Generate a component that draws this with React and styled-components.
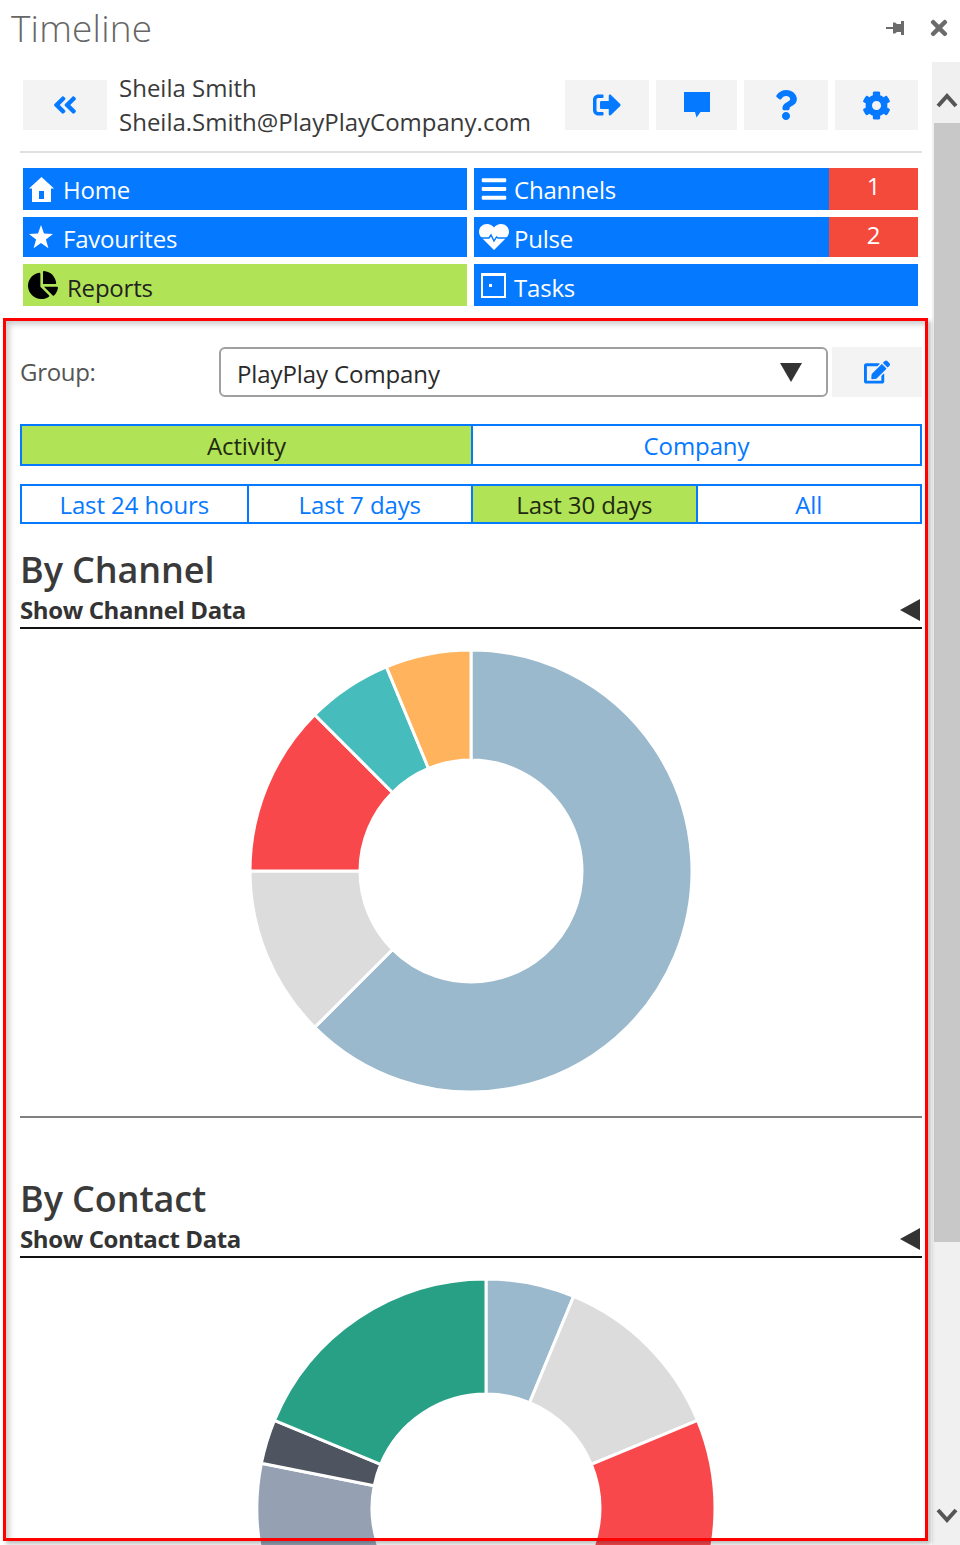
import React from "react";
import styled, { createGlobalStyle } from "styled-components";
import {
  FaAngleDoubleLeft,
  FaSignOutAlt,
  FaQuestion,
  FaCog,
  FaEdit,
  FaChartPie,
  FaBars,
  FaTimes,
} from "react-icons/fa";

const GlobalStyle = createGlobalStyle`
  html, body {
    margin: 0;
    padding: 0;
    background: #fff;
  }
  * {
    box-sizing: border-box;
  }
`;

const BLUE = "#0579ff";
const GREEN = "#b1e356";
const RED = "#f44a3c";

const Window = styled.div`
  position: relative;
  width: 960px;
  height: 1545px;
  overflow: hidden;
  background: #fff;
  font-family: "Open Sans", "Noto Sans", sans-serif;
  color: #3a3a3a;
`;

const TitleBar = styled.div`
  height: 62px;
  display: flex;
  align-items: center;
  justify-content: space-between;
  padding: 0 9px 6px 11px;
`;

const Title = styled.h1`
  margin: 0;
  font-size: 37px;
  font-weight: 300;
  line-height: 44px;
  letter-spacing: 0.2px;
  color: #666;
`;

const WindowActions = styled.div`
  display: flex;
  align-items: center;
  gap: 23px;
  color: #6b6b6b;
  font-size: 24px;
`;

const Body = styled.div`
  display: flex;
  height: 1483px;
`;

const Main = styled.main`
  flex: 1;
  min-width: 0;
`;

const Header = styled.div`
  display: flex;
  align-items: flex-start;
  padding: 18px 14px 0 23px;
  height: 89px;
`;

const IconButton = styled.button`
  width: ${(p) => p.$w || 84}px;
  height: 50px;
  margin-left: ${(p) => p.$left || 0}px;
  border: 0;
  padding: 0;
  background: #f3f3f3;
  color: ${BLUE};
  display: flex;
  align-items: center;
  justify-content: center;
  font-size: ${(p) => p.$size || 28}px;
  flex: none;
`;

const UserInfo = styled.div`
  margin: -9px 0 0 12px;
  flex: 1;
  font-size: 24px;
  line-height: 34px;
  white-space: nowrap;
`;

const HeaderActions = styled.div`
  display: flex;
  gap: 7px;
`;

const Rule = styled.hr`
  margin: ${(p) => p.$margin || "0 10px 0 20px"};
  border: 0;
  height: 2px;
  background: ${(p) => p.$color || "#e0e0e0"};
`;

const Nav = styled.nav`
  display: grid;
  grid-template-columns: 444px 444px;
  grid-template-rows: 42px 40px 42px;
  gap: 7px;
  padding: 15px 0 0 23px;
`;

const NavItem = styled.div`
  display: flex;
  align-items: center;
  background: ${(p) => (p.$active ? GREEN : BLUE)};
  color: ${(p) => (p.$active ? "#222" : "#fff")};
  font-size: 24px;
  letter-spacing: -0.2px;
  overflow: hidden;
`;

const NavIcon = styled.span`
  width: ${(p) => p.$w}px;
  margin-left: ${(p) => p.$left}px;
  display: flex;
  align-items: center;
  font-size: ${(p) => p.$size || 24}px;
  color: ${(p) => p.$color || "inherit"};
  flex: none;
`;

const NavLabel = styled.span`
  flex: 1;
  padding-top: ${(p) => p.$nudge ?? 3}px;
`;

const NavBadge = styled.span`
  align-self: stretch;
  width: 89px;
  background: ${RED};
  color: #fff;
  display: flex;
  justify-content: center;
  line-height: 36px;
`;

const Panel = styled.section`
  padding: 41px 10px 0 20px;
`;

const GroupRow = styled.div`
  display: flex;
  align-items: center;
  height: 50px;
`;

const GroupLabel = styled.label`
  width: 199px;
  font-size: 24px;
  letter-spacing: -0.3px;
  color: #555;
  margin-top: -2px;
`;

const Select = styled.div`
  width: 609px;
  height: 50px;
  border: 2px solid #a0a0a0;
  border-radius: 6px;
  display: flex;
  align-items: center;
  justify-content: space-between;
  padding: 2px 24px 0 16px;
  font-size: 24px;
  letter-spacing: -0.1px;
  color: #2a2a2a;
`;

const SelectArrow = styled.span`
  width: 0;
  height: 0;
  border-left: 11px solid transparent;
  border-right: 11px solid transparent;
  border-top: 19px solid #333;
  margin-top: -2px;
`;

const Segments = styled.div`
  display: grid;
  grid-template-columns: repeat(${(p) => p.$count}, 1fr);
  height: ${(p) => p.$h}px;
  margin-top: ${(p) => p.$top}px;
  border: 2px solid ${BLUE};
`;

const Segment = styled.div`
  display: flex;
  align-items: center;
  justify-content: center;
  font-size: 24px;
  letter-spacing: -0.1px;
  background: ${(p) => (p.$active ? GREEN : "#fff")};
  color: ${(p) => (p.$active ? "#1f2a10" : BLUE)};
  & + & {
    border-left: 2px solid ${BLUE};
  }
`;

const SectionTitle = styled.h2`
  margin: ${(p) => p.$top}px 0 0;
  font-size: 36px;
  font-weight: 600;
  line-height: 44px;
  letter-spacing: -0.1px;
  color: #3a3a3a;
`;

const ShowRow = styled.div`
  display: flex;
  align-items: center;
  justify-content: space-between;
  height: 37px;
  border-bottom: 2px solid #111;
  font-size: 24px;
  font-weight: 700;
  letter-spacing: -0.4px;
  color: #333;
`;

const Caret = styled.span`
  width: 0;
  height: 0;
  margin: 0 2px 0 0;
  border-top: 11px solid transparent;
  border-bottom: 11px solid transparent;
  border-right: 20px solid #333;
`;

const ChartWrap = styled.div`
  display: flex;
  justify-content: center;
  margin-top: 21px;
  padding-left: ${(p) => p.$shift || 0}px;
`;

const Scrollbar = styled.div`
  width: 28px;
  flex: none;
  background: #f0f0f0;
  display: flex;
  flex-direction: column;
`;

const ScrollArrow = styled.div`
  height: 61px;
  display: flex;
  align-items: center;
  justify-content: center;
  padding: ${(p) => (p.$up ? "16px 0 0 2px" : "0 0 0 2px")};
  color: #555;
`;

const ScrollThumb = styled.div`
  height: 1119px;
  margin-left: 2px;
  background: #c8c8c8;
`;

const ScrollSpacer = styled.div`
  flex: 1;
`;

const Highlight = styled.div`
  position: absolute;
  left: 3px;
  top: 318px;
  width: 925px;
  height: 1223px;
  border: 3px solid #f00;
  box-shadow: 3px 3px 4px rgba(0, 0, 0, 0.25), inset 5px 5px 6px -2px rgba(0, 0, 0, 0.22);
  pointer-events: none;
`;

const polar = (c, r, deg) => {
  const a = ((deg - 90) * Math.PI) / 180;
  return [c + r * Math.cos(a), c + r * Math.sin(a)];
};

function Donut({ size, inner, slices }) {
  const c = size / 2;
  const outer = size / 2;
  let from = 0;
  return (
    <svg width={size} height={size} viewBox={`0 0 ${size} ${size}`}>
      {slices.map((s) => {
        const to = from + s.deg;
        const [x1, y1] = polar(c, outer, from);
        const [x2, y2] = polar(c, outer, to);
        const [x3, y3] = polar(c, inner, to);
        const [x4, y4] = polar(c, inner, from);
        const large = s.deg > 180 ? 1 : 0;
        const d = `M${x1} ${y1}A${outer} ${outer} 0 ${large} 1 ${x2} ${y2}L${x3} ${y3}A${inner} ${inner} 0 ${large} 0 ${x4} ${y4}Z`;
        from = to;
        return <path key={s.color} d={d} fill={s.color} stroke="#fff" strokeWidth="3" />;
      })}
    </svg>
  );
}

const channelSlices = [
  { color: "#9ab9cc", deg: 225 },
  { color: "#dcdcdc", deg: 45 },
  { color: "#f9484b", deg: 45 },
  { color: "#47bcbc", deg: 22.5 },
  { color: "#ffb35c", deg: 22.5 },
];

const contactSlices = [
  { color: "#9ab9cc", deg: 22.5 },
  { color: "#dcdcdc", deg: 45 },
  { color: "#f9484b", deg: 45 },
  { color: "#ffb35c", deg: 90 },
  { color: "#47bcbc", deg: 45 },
  { color: "#95a1b3", deg: 33.75 },
  { color: "#4f5461", deg: 11.25 },
  { color: "#28a085", deg: 67.5 },
];

const PinIcon = () => (
  <svg width="18" height="14" viewBox="0 0 18 14" fill="currentColor">
    <path d="M0 6h7V1.500h2L11 3h4V0h3v14h-3v-3h-4l-2 1.500H7V8H0z" />
  </svg>
);

const CommentIcon = () => (
  <svg width="28" height="26" viewBox="0 0 28 26" fill="currentColor">
    <path d="M1 0h26v20H17.500L13.500 25.500 12 20H1z" />
  </svg>
);

const HomeIcon = () => (
  <svg width="25" height="25" viewBox="0 0 25 25" fill="#fff">
    <path fillRule="evenodd" d="M12.500 0 25 11.500h-3V25H3V11.500H0zM10 14v8h5v-8z" />
  </svg>
);

const StarIcon = () => (
  <svg width="24" height="24" viewBox="0 0 24 24" fill="#fff">
    <path d="M12 0l3 8.600 9 .3-7.100 5.500 2.500 8.800L12 18l-7.400 5.200 2.500-8.800L0 8.900l9-.3z" />
  </svg>
);

const PulseIcon = () => (
  <svg width="30" height="26" viewBox="0 0 30 26">
    <path
      fill="#fff"
      d="M15 26 2.500 13.500C.8 11.800 0 9.900 0 7.800 0 3.300 3.500 0 8 0c2.800 0 5.300 1.300 7 3.500C16.700 1.300 19.200 0 22 0c4.500 0 8 3.300 8 7.800 0 2.100-.8 4-2.500 5.700z"
    />
    <path fill="none" stroke={BLUE} strokeWidth="1.400" d="M1 14h9l2-3 3 6 2.500-4 1.500 1h11" />
  </svg>
);

const TaskIcon = () => (
  <svg width="25" height="25" viewBox="0 0 25 25" fill="none">
    <rect x="1" y="1" width="23" height="23" stroke="#fff" strokeWidth="2" />
    <rect x="1" y="1" width="23" height="2" fill="#fff" />
    <rect x="8" y="11" width="3" height="3" fill="#fff" />
  </svg>
);

const Chevron = ({ down }) => (
  <svg width="22" height="16" viewBox="0 0 22 16" fill="none" stroke="currentColor" strokeWidth="4">
    <path d={down ? "M2 3l9 10 9-10" : "M2 13l9-10 9 10"} />
  </svg>
);

const periods = ["Last 24 hours", "Last 7 days", "Last 30 days", "All"];

export default function App() {
  return (
    <Window>
      <GlobalStyle />
      <TitleBar>
        <Title>Timeline</Title>
        <WindowActions>
          <PinIcon />
          <FaTimes />
        </WindowActions>
      </TitleBar>
      <Body>
        <Main>
          <Header>
            <IconButton>
              <FaAngleDoubleLeft />
            </IconButton>
            <UserInfo>
              Sheila Smith
              <br />
              Sheila.Smith@PlayPlayCompany.com
            </UserInfo>
            <HeaderActions>
              <IconButton $w={84}>
                <FaSignOutAlt />
              </IconButton>
              <IconButton $w={81}>
                <CommentIcon />
              </IconButton>
              <IconButton $w={84} $size={30}>
                <FaQuestion />
              </IconButton>
              <IconButton $w={83} $size={29}>
                <FaCog />
              </IconButton>
            </HeaderActions>
          </Header>
          <Rule />
          <Nav>
            <NavItem>
              <NavIcon $left={6} $w={34}>
                <HomeIcon />
              </NavIcon>
              <NavLabel $nudge={1}>Home</NavLabel>
            </NavItem>
            <NavItem>
              <NavIcon $left={6} $w={34} $size={28}>
                <FaBars />
              </NavIcon>
              <NavLabel $nudge={1}>Channels</NavLabel>
              <NavBadge>1</NavBadge>
            </NavItem>
            <NavItem>
              <NavIcon $left={6} $w={34}>
                <StarIcon />
              </NavIcon>
              <NavLabel>Favourites</NavLabel>
            </NavItem>
            <NavItem>
              <NavIcon $left={5} $w={35}>
                <PulseIcon />
              </NavIcon>
              <NavLabel>Pulse</NavLabel>
              <NavBadge>2</NavBadge>
            </NavItem>
            <NavItem $active>
              <NavIcon $left={5} $w={39} $size={30} $color="#000">
                <FaChartPie />
              </NavIcon>
              <NavLabel $nudge={5}>Reports</NavLabel>
            </NavItem>
            <NavItem>
              <NavIcon $left={7} $w={33}>
                <TaskIcon />
              </NavIcon>
              <NavLabel $nudge={5}>Tasks</NavLabel>
            </NavItem>
          </Nav>
          <Panel>
            <GroupRow>
              <GroupLabel>Group:</GroupLabel>
              <Select>
                PlayPlay Company
                <SelectArrow />
              </Select>
              <IconButton $w={90} $size={26} $left={4}>
                <FaEdit />
              </IconButton>
            </GroupRow>
            <Segments $count={2} $h={42} $top={27}>
              <Segment $active>Activity</Segment>
              <Segment>Company</Segment>
            </Segments>
            <Segments $count={4} $h={40} $top={18}>
              {periods.map((p) => (
                <Segment key={p} $active={p === "Last 30 days"}>
                  {p}
                </Segment>
              ))}
            </Segments>
            <SectionTitle $top={24}>By Channel</SectionTitle>
            <ShowRow>
              Show Channel Data
              <Caret />
            </ShowRow>
            <ChartWrap>
              <Donut size={442} inner={111} slices={channelSlices} />
            </ChartWrap>
            <Rule $color="#808080" $margin="24px 0 0" />
            <SectionTitle $top={59}>By Contact</SectionTitle>
            <ShowRow>
              Show Contact Data
              <Caret />
            </ShowRow>
            <ChartWrap $shift={30}>
              <Donut size={458} inner={114} slices={contactSlices} />
            </ChartWrap>
          </Panel>
        </Main>
        <Scrollbar>
          <ScrollArrow $up>
            <Chevron />
          </ScrollArrow>
          <ScrollThumb />
          <ScrollSpacer />
          <ScrollArrow>
            <Chevron down />
          </ScrollArrow>
        </Scrollbar>
      </Body>
      <Highlight />
    </Window>
  );
}
